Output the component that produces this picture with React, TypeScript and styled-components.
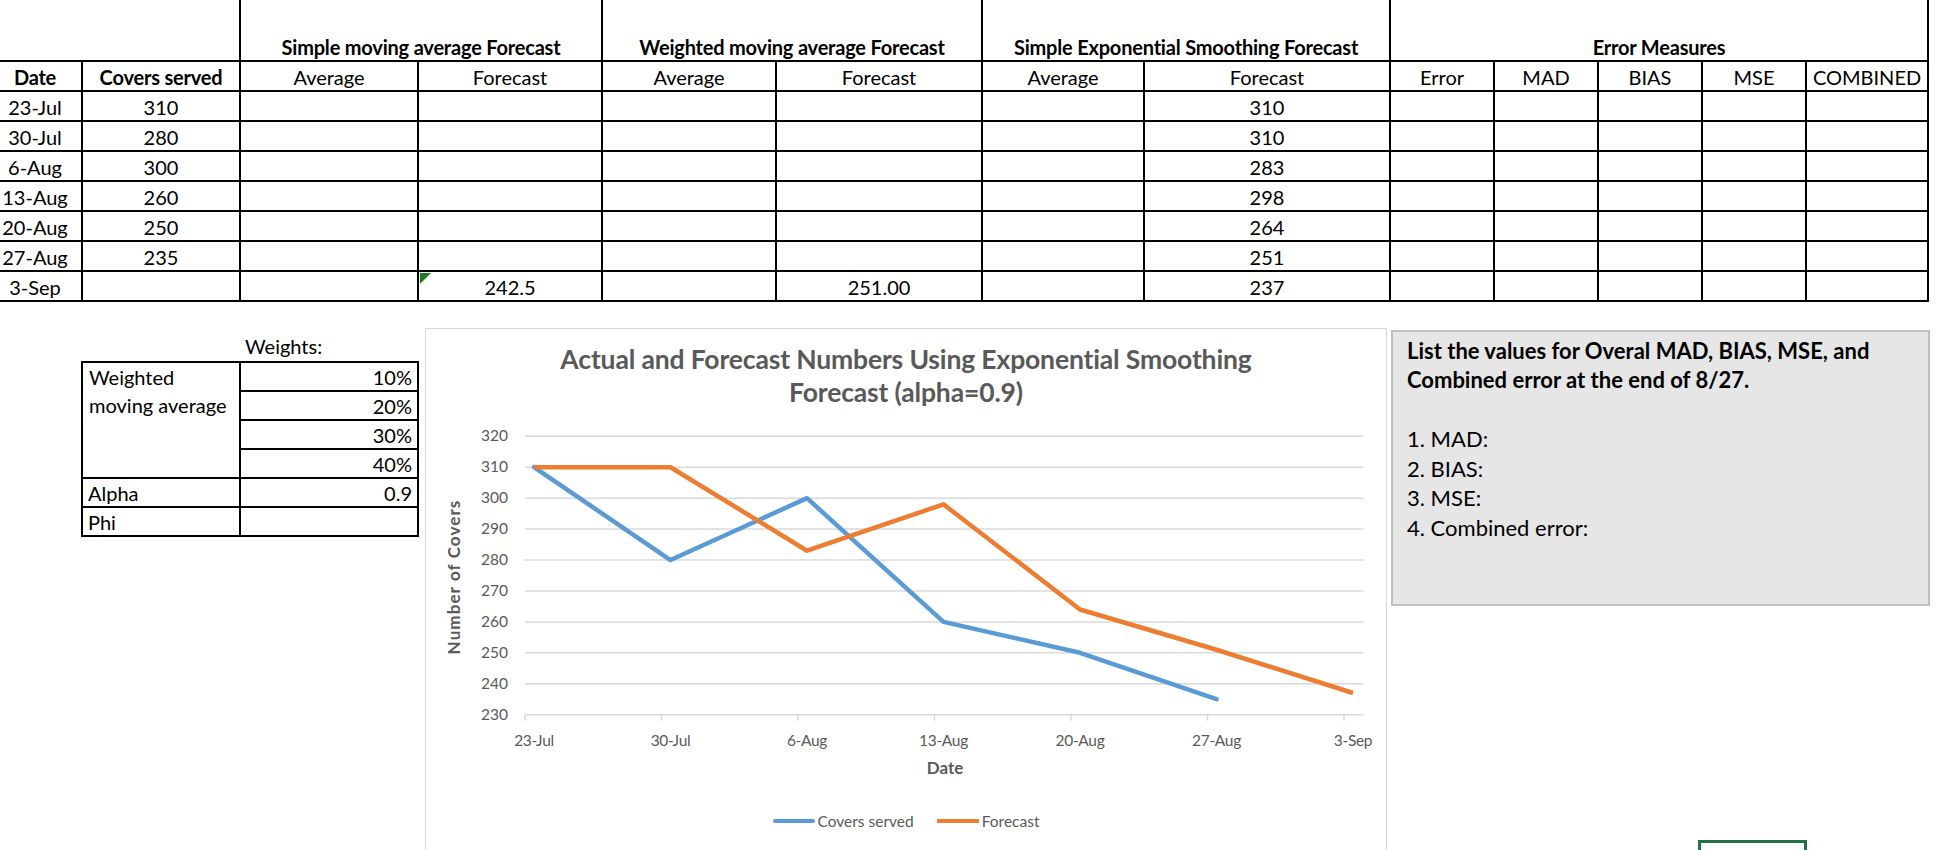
import React from "react";
import styled, { createGlobalStyle } from "styled-components";

const GlobalStyle = createGlobalStyle`
  html, body {
    margin: 0;
    padding: 0;
    background: #fff;
  }
  body {
    font-family: Lato, "Open Sans", sans-serif;
    color: #000;
    overflow: hidden;
  }
`;

const Sheet = styled.div`
  position: relative;
  width: 1938px;
  height: 850px;
  overflow: hidden;
`;

const Grid = styled.table`
  border-collapse: collapse;
  table-layout: fixed;
  width: 1940px;
  margin-left: -13px;
  font-size: 20px;
`;

const Row = styled.tr<{ $tall?: boolean }>`
  height: ${(p) => (p.$tall ? "61px" : "30px")};
`;

const Cell = styled.td<{ $bold?: boolean; $open?: boolean }>`
  position: relative;
  border: 2px solid #000;
  border-top: ${(p) => (p.$open ? "none" : "2px solid #000")};
  padding: 0 4px 1px;
  text-align: center;
  vertical-align: bottom;
  line-height: 24px;
  white-space: nowrap;
  font-weight: ${(p) => (p.$bold ? 700 : 400)};
  font-size: 20px;
  letter-spacing: ${(p) => (p.$bold ? "-0.2px" : "0")};
`;

const ErrorFlag = styled.span`
  position: absolute;
  left: 1px;
  top: 1px;
  width: 0;
  height: 0;
  border-top: 11px solid #1e7b1e;
  border-right: 11px solid transparent;
`;

const Lower = styled.div`
  display: flex;
  align-items: flex-start;
  padding-top: 26px;
`;

const WeightsBlock = styled.div`
  margin-left: 81px;
  margin-top: 3px;
  width: 336px;
  font-size: 20px;
`;

const WeightsLabel = styled.div`
  height: 30px;
  line-height: 30px;
  padding-left: 164px;
`;

const WeightsTable = styled.table`
  border-collapse: collapse;
  table-layout: fixed;
  width: 336px;
`;

const WCell = styled.td<{ $align?: "left" | "right"; $top?: boolean }>`
  border: 2px solid #000;
  height: 26px;
  padding: ${(p) => (p.$top ? "0 6px" : "0 5px 1px")};
  text-align: ${(p) => p.$align ?? "left"};
  vertical-align: ${(p) => (p.$top ? "top" : "bottom")};
  line-height: ${(p) => (p.$top ? "28px" : "24px")};
`;

const ChartCard = styled.div`
  box-sizing: border-box;
  margin-left: 8px;
  width: 962px;
  height: 560px;
  border: 1px solid #d6d6d6;
  background: #fff;
  display: flex;
  flex-direction: column;
  align-items: center;
`;

const ChartTitle = styled.div`
  padding: 14px 0 2px;
  text-align: center;
  white-space: nowrap;
  color: #595959;
  font-weight: 700;
  font-size: 26.5px;
  letter-spacing: -0.15px;
  line-height: 33px;
`;

const Plot = styled.svg`
  display: block;
  width: 960px;
  height: 380px;
  font-family: Lato, sans-serif;
`;

const Legend = styled.div`
  display: flex;
  align-items: center;
  gap: 23px;
  margin-top: 20px;
  color: #595959;
  font-size: 15.5px;
  line-height: 20px;
`;

const LegendItem = styled.div`
  display: flex;
  align-items: center;
  gap: 3px;
`;

const Swatch = styled.span<{ $color: string; $round?: boolean }>`
  display: inline-block;
  width: 42px;
  height: 4.5px;
  border-radius: ${(p) => (p.$round ? "3px" : "0")};
  background: ${(p) => p.$color};
`;

const InfoBox = styled.div`
  box-sizing: border-box;
  margin-left: 4px;
  margin-top: 2px;
  width: 539px;
  height: 276px;
  padding: 4px 14px;
  background: #e6e6e6;
  border: 2px solid #bfbfbf;
  font-size: 22px;
`;

const InfoLead = styled.p`
  margin: 0;
  font-weight: 700;
  line-height: 29px;
`;

const InfoList = styled.ol`
  list-style: none;
  margin: 30px 0 0;
  padding: 0;
  line-height: 29.5px;
`;

const Selection = styled.div`
  position: absolute;
  left: 1698px;
  top: 840px;
  width: 109px;
  height: 40px;
  box-sizing: border-box;
  border: 3px solid #217346;
`;

const BLUE = "#5b9bd5";
const ORANGE = "#ed7d31";
const GRID = "#d9d9d9";
const AXIS_TEXT = "#595959";

const dates = ["23-Jul", "30-Jul", "6-Aug", "13-Aug", "20-Aug", "27-Aug", "3-Sep"];
const covers = [310, 280, 300, 260, 250, 235];
const forecast = [310, 310, 283, 298, 264, 251, 237];
const yTicks = [320, 310, 300, 290, 280, 270, 260, 250, 240, 230];

const TICK_X0 = 99;
const POINT_X0 = 108;
const STEP = 136.5;
const yAt = (v: number) => 25.3 + (320 - v) * 3.093;
const pointsOf = (vals: number[]) =>
  vals.map((v, i) => `${POINT_X0 + i * STEP},${yAt(v)}`).join(" ");

// sheet rows: date, covers, sma avg, sma fc, wma avg, wma fc, ses avg, ses fc
const sheetRows: string[][] = [
  ["23-Jul", "310", "", "", "", "", "", "310"],
  ["30-Jul", "280", "", "", "", "", "", "310"],
  ["6-Aug", "300", "", "", "", "", "", "283"],
  ["13-Aug", "260", "", "", "", "", "", "298"],
  ["20-Aug", "250", "", "", "", "", "", "264"],
  ["27-Aug", "235", "", "", "", "", "", "251"],
  ["3-Sep", "", "", "242.5", "", "251.00", "", "237"],
];

const colWidths = [94, 158, 178, 184, 174, 206, 162, 246, 104, 104, 104, 104, 122];

const ForecastChart = () => (
  <ChartCard>
    <ChartTitle>
      Actual and Forecast Numbers Using Exponential Smoothing
      <br />
      Forecast (alpha=0.9)
    </ChartTitle>
    <Plot viewBox="0 0 960 380">
      {yTicks.map((t) => (
        <g key={t}>
          <line x1={TICK_X0} x2={937.5} y1={yAt(t)} y2={yAt(t)} stroke={GRID} strokeWidth={1.5} />
          <text x={82} y={yAt(t) + 5} textAnchor="end" fontSize={15.5} fill={AXIS_TEXT}>
            {t}
          </text>
        </g>
      ))}
      {dates.map((d, i) => (
        <g key={d}>
          <line
            x1={TICK_X0 + i * STEP}
            x2={TICK_X0 + i * STEP}
            y1={yAt(230)}
            y2={yAt(230) + 6}
            stroke={GRID}
            strokeWidth={1.5}
          />
          <text
            x={POINT_X0 + i * STEP}
            y={334.5}
            textAnchor="middle"
            fontSize={15.5}
            letterSpacing={-0.3}
            fill={AXIS_TEXT}
          >
            {d}
          </text>
        </g>
      ))}
      <text
        transform="translate(34 166) rotate(-90)"
        textAnchor="middle"
        fontSize={17}
        fontWeight={700}
        letterSpacing={1.1}
        fill={AXIS_TEXT}
      >
        Number of Covers
      </text>
      <text x={519} y={363} textAnchor="middle" fontSize={17} fontWeight={700} fill={AXIS_TEXT}>
        Date
      </text>
      <polyline
        points={pointsOf(covers)}
        fill="none"
        stroke={BLUE}
        strokeWidth={4.5}
        strokeLinejoin="round"
        strokeLinecap="round"
      />
      <polyline
        points={pointsOf(forecast)}
        fill="none"
        stroke={ORANGE}
        strokeWidth={4.5}
        strokeLinejoin="round"
        strokeLinecap="butt"
      />
    </Plot>
    <Legend>
      <LegendItem>
        <Swatch $color={BLUE} $round />
        Covers served
      </LegendItem>
      <LegendItem>
        <Swatch $color={ORANGE} />
        Forecast
      </LegendItem>
    </Legend>
  </ChartCard>
);

export default function App() {
  return (
    <Sheet>
      <GlobalStyle />
      <Grid>
        <colgroup>
          {colWidths.map((w, i) => (
            <col key={i} style={{ width: w }} />
          ))}
        </colgroup>
        <tbody>
          <Row $tall>
            <Cell colSpan={2} $open />
            <Cell colSpan={2} $open $bold>
              Simple moving average Forecast
            </Cell>
            <Cell colSpan={2} $open $bold>
              Weighted moving average Forecast
            </Cell>
            <Cell colSpan={2} $open $bold>
              Simple Exponential Smoothing Forecast
            </Cell>
            <Cell colSpan={5} $open $bold>
              Error Measures
            </Cell>
          </Row>
          <Row>
            <Cell $bold>Date</Cell>
            <Cell $bold>Covers served</Cell>
            <Cell>Average</Cell>
            <Cell>Forecast</Cell>
            <Cell>Average</Cell>
            <Cell>Forecast</Cell>
            <Cell>Average</Cell>
            <Cell>Forecast</Cell>
            <Cell>Error</Cell>
            <Cell>MAD</Cell>
            <Cell>BIAS</Cell>
            <Cell>MSE</Cell>
            <Cell>COMBINED</Cell>
          </Row>
          {sheetRows.map((r) => (
            <Row key={r[0]}>
              {r.map((v, i) => (
                <Cell key={i}>
                  {r[0] === "3-Sep" && i === 3 && <ErrorFlag />}
                  {v}
                </Cell>
              ))}
              {[0, 1, 2, 3, 4].map((k) => (
                <Cell key={`e${k}`} />
              ))}
            </Row>
          ))}
        </tbody>
      </Grid>

      <Lower>
        <WeightsBlock>
          <WeightsLabel>Weights:</WeightsLabel>
          <WeightsTable>
            <colgroup>
              <col style={{ width: 158 }} />
              <col style={{ width: 178 }} />
            </colgroup>
            <tbody>
              <tr>
                <WCell rowSpan={4} $top>
                  Weighted
                  <br />
                  moving average
                </WCell>
                <WCell $align="right">10%</WCell>
              </tr>
              <tr>
                <WCell $align="right">20%</WCell>
              </tr>
              <tr>
                <WCell $align="right">30%</WCell>
              </tr>
              <tr>
                <WCell $align="right">40%</WCell>
              </tr>
              <tr>
                <WCell>Alpha</WCell>
                <WCell $align="right">0.9</WCell>
              </tr>
              <tr>
                <WCell>Phi</WCell>
                <WCell $align="right" />
              </tr>
            </tbody>
          </WeightsTable>
        </WeightsBlock>

        <ForecastChart />

        <InfoBox>
          <InfoLead>
            List the values for Overal MAD, BIAS, MSE, and
            <br />
            Combined error at the end of 8/27.
          </InfoLead>
          <InfoList>
            <li>1. MAD:</li>
            <li>2. BIAS:</li>
            <li>3. MSE:</li>
            <li>4. Combined error:</li>
          </InfoList>
        </InfoBox>
      </Lower>
      <Selection />
    </Sheet>
  );
}
